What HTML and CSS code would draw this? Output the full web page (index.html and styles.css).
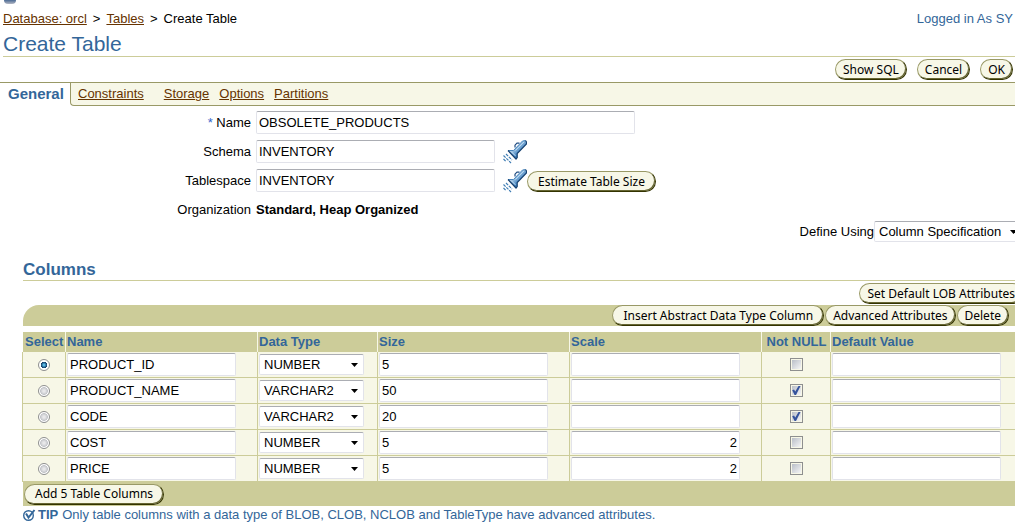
FILE: index.html
```html
<!DOCTYPE html>
<html lang="en">
<head>
<meta charset="utf-8">
<title>Create Table</title>
<link rel="stylesheet" href="styles.css">
</head>
<body>
<svg class="defs" width="0" height="0" aria-hidden="true">
  <defs>
    <linearGradient id="barrel" x1="0" y1="0" x2="1" y2="1">
      <stop offset="0.3" stop-color="#c4def2"/><stop offset="0.65" stop-color="#3d7fbd"/>
    </linearGradient>
    <symbol id="torch" viewBox="0 0 24 24">
      <path d="M12 7.5V5.2L14 3.2H16.5" fill="none" stroke="#1d4a80" stroke-width="1.2"/>
      <path d="M5 10.5H10.5L19.5 1L22.5.5L23.5 2V4L14.2 13.5V17.5L13 19Z" fill="url(#barrel)"/>
      <path d="M5 10.5H10.5L19.5 1L22.5.5" fill="none" stroke="#4a86bd"/>
      <path d="M22.5.5L23.5 2V4L14.2 13.5V17.5L13 19L5 10.5" fill="none" stroke="#16406f" stroke-width="1.2"/>
      <path d="M8.5 11.8L12.4 15.8M12.5 10.5L21 2" stroke="#b9d8f0" fill="none"/>
      <path d="M3 14L9 20M.5 15.5L8 23M.5 19L3 21.5" fill="none" stroke="#3f7db4" stroke-width="1.2" stroke-dasharray="3 1"/>
    </symbol>
  </defs>
</svg>
<div class="orb" aria-hidden="true"></div>
<header class="head">
  <nav class="crumbs"><a href="#">Database: orcl</a><span>&gt;</span><a href="#">Tables</a><span>&gt;</span><b>Create Table</b></nav>
  <span class="login">Logged in As SY</span>
</header>
<h1 class="title">Create Table</h1>
<div class="actions">
  <button class="btn">Show SQL</button><button class="btn">Cancel</button><button class="btn">OK</button>
</div>
<nav class="tabs">
  <span class="tab-current">General</span>
  <div class="tab-strip"><a href="#" class="wide">Constraints</a><a href="#">Storage</a><a href="#">Options</a><a href="#">Partitions</a></div>
</nav>
<form class="form">
  <div class="row"><label for="name"><span class="req">*</span> Name</label><input id="name" class="field long" value="OBSOLETE_PRODUCTS"></div>
  <div class="row"><label for="schema">Schema</label><input id="schema" class="field mid" value="INVENTORY"><button type="button" class="pick" aria-label="Select schema"><svg width="24" height="24"><use href="#torch"/></svg></button></div>
  <div class="row"><label for="space">Tablespace</label><input id="space" class="field mid" value="INVENTORY"><button type="button" class="pick" aria-label="Select tablespace"><svg width="24" height="24"><use href="#torch"/></svg></button><button type="button" class="btn btn-long btn-low">Estimate Table Size</button></div>
  <div class="row"><span class="label">Organization</span><strong>Standard, Heap Organized</strong></div>
</form>
<div class="define"><label for="define">Define Using</label><select id="define" class="select"><option>Column Specification</option></select></div>
<section class="columns">
  <h2>Columns</h2>
  <div class="lob"><button class="btn">Set Default LOB Attributes</button></div>
  <div class="bar"><button class="btn btn-long">Insert Abstract Data Type Column</button><button class="btn">Advanced Attributes</button><button class="btn">Delete</button></div>
  <table class="grid">
    <colgroup><col class="c-select"><col class="c-text"><col class="c-type"><col class="c-text"><col class="c-text"><col class="c-null"><col></colgroup>
    <thead><tr><th>Select</th><th>Name</th><th>Data Type</th><th>Size</th><th>Scale</th><th class="center">Not NULL</th><th>Default Value</th></tr></thead>
    <tbody>
      <tr><td class="center"><input type="radio" name="r" aria-label="Select PRODUCT_ID" checked></td><td><input class="field" aria-label="Name" value="PRODUCT_ID"></td><td><select class="select" aria-label="Data Type"><option>NUMBER</option></select></td><td><input class="field" aria-label="Size" value="5"></td><td><input class="field num" aria-label="Scale"></td><td class="center"><input type="checkbox" aria-label="Not NULL"></td><td><input class="field" aria-label="Default Value"></td></tr>
      <tr><td class="center"><input type="radio" name="r" aria-label="Select PRODUCT_NAME"></td><td><input class="field" aria-label="Name" value="PRODUCT_NAME"></td><td><select class="select" aria-label="Data Type"><option>VARCHAR2</option></select></td><td><input class="field" aria-label="Size" value="50"></td><td><input class="field num" aria-label="Scale"></td><td class="center"><input type="checkbox" aria-label="Not NULL" checked></td><td><input class="field" aria-label="Default Value"></td></tr>
      <tr><td class="center"><input type="radio" name="r" aria-label="Select CODE"></td><td><input class="field" aria-label="Name" value="CODE"></td><td><select class="select" aria-label="Data Type"><option>VARCHAR2</option></select></td><td><input class="field" aria-label="Size" value="20"></td><td><input class="field num" aria-label="Scale"></td><td class="center"><input type="checkbox" aria-label="Not NULL" checked></td><td><input class="field" aria-label="Default Value"></td></tr>
      <tr><td class="center"><input type="radio" name="r" aria-label="Select COST"></td><td><input class="field" aria-label="Name" value="COST"></td><td><select class="select" aria-label="Data Type"><option>NUMBER</option></select></td><td><input class="field" aria-label="Size" value="5"></td><td><input class="field num" aria-label="Scale" value="2"></td><td class="center"><input type="checkbox" aria-label="Not NULL"></td><td><input class="field" aria-label="Default Value"></td></tr>
      <tr><td class="center"><input type="radio" name="r" aria-label="Select PRICE"></td><td><input class="field" aria-label="Name" value="PRICE"></td><td><select class="select" aria-label="Data Type"><option>NUMBER</option></select></td><td><input class="field" aria-label="Size" value="5"></td><td><input class="field num" aria-label="Scale" value="2"></td><td class="center"><input type="checkbox" aria-label="Not NULL"></td><td><input class="field" aria-label="Default Value"></td></tr>
    </tbody>
  </table>
  <div class="foot"><button class="btn btn-long">Add 5 Table Columns</button></div>
  <p class="tip"><svg width="13" height="13" viewBox="0 0 13 13" aria-hidden="true"><circle cx="5.5" cy="6.5" r="4.8" fill="#fff" stroke="#336699" stroke-width="1.4"/><path d="M3 4.5L5.5 8.5L11.5 1" fill="none" stroke="#336699" stroke-width="2"/></svg><b>TIP</b><span>Only table columns with a data type of BLOB, CLOB, NCLOB and TableType have advanced attributes.</span></p>
</section>
</body>
</html>
```
FILE: styles.css
```css
* { box-sizing: border-box; }
body {
  margin: 0;
  overflow: hidden;
  background: #fff;
  color: #000;
  font: 13px/16px "Liberation Sans", Arial, sans-serif;
  white-space: nowrap;
}
input, select { font: inherit; color: #000; }
a { color: #663300; }
.defs { display: block; height: 0; }
.orb {
  width: 12px;
  height: 4px;
  margin-left: 4px;
  border-radius: 0 0 6px 6px;
  background: linear-gradient(#4a6a94, #b4b8c4);
}
.head { display: flex; justify-content: space-between; padding: 7px 2px 0 3px; }
.crumbs { display: flex; gap: 6px; }
.crumbs b { font-weight: 400; }
.login { color: #336699; }
.title {
  margin: 5px 0 0 3px;
  border-bottom: 1px solid #cccc99;
  color: #336699;
  font-size: 21px;
  font-weight: 400;
  line-height: 24px;
}
.btn {
  height: 21px;
  padding: 0 7px;
  border: 1px solid #999966;
  border-right-color: #333300;
  border-bottom-color: #333300;
  border-radius: 11px;
  background: #f7f7e7;
  box-shadow: inset -1px -1px #666633;
  color: #000;
  font: 12px/16px "Noto Sans", sans-serif;
  white-space: nowrap;
}
.btn-long { padding: 0 10px; }
.btn-low { align-self: flex-end; }
.actions { display: flex; justify-content: flex-end; gap: 10px; padding: 2px 2px 2px 0; }
.tabs { display: flex; height: 24px; border-top: 1px solid #999966; }
.tab-current {
  width: 70px;
  padding-left: 8px;
  color: #336699;
  font-size: 15px;
  font-weight: 700;
  line-height: 22px;
}
.tab-strip {
  display: flex;
  flex: 1;
  gap: 10px;
  padding-left: 7px;
  border: solid #999966;
  border-width: 0 0 1px 1px;
  border-radius: 0 0 0 4px;
  background: #f7f7e7;
  line-height: 22px;
}
.wide { margin-right: 10px; }
.form { display: flex; flex-direction: column; gap: 6px; padding-top: 5px; }
.row { display: flex; height: 23px; align-items: center; }
.row label, .label { width: 251px; margin-right: 5px; text-align: right; }
.req { color: #3366cc; }
.field {
  display: block;
  width: 169px;
  height: 23px;
  padding: 0 2px;
  border: 1px solid #e2e3ea;
  border-top-color: #abadb3;
  border-radius: 2px;
  background: #fff;
}
.long { width: 379px; }
.mid { width: 239px; }
.num { text-align: right; }
.pick { width: 24px; height: 24px; margin-left: 8px; padding: 0; border: 0; background: none; }
.pick svg { display: block; }
.select {
  appearance: none;
  display: block;
  width: 105px;
  height: 21px;
  padding: 0 4px;
  border: 1px solid #e2e3ea;
  border-top-color: #abadb3;
  border-radius: 2px;
  background: #fff url("data:image/svg+xml,%3Csvg xmlns='http://www.w3.org/2000/svg' width='7' height='4'%3E%3Cpath d='M0 0h7L3.5 4z'/%3E%3C/svg%3E") no-repeat right 5px center;
}
.define { display: flex; justify-content: flex-end; align-items: center; margin-right: -8px; }
.define .select { width: 149px; }
.columns { margin-left: 23px; }
.columns h2 {
  margin: 18px 0 0;
  border-bottom: 1px solid #cccc99;
  color: #336699;
  font-size: 17px;
  line-height: 20px;
}
.lob { display: flex; justify-content: flex-end; margin-right: -8px; padding: 2px 0 1px; }
.bar {
  display: flex;
  justify-content: flex-end;
  gap: 1px;
  padding-right: 6px;
  border-radius: 16px 0 0;
  background: #cccc99;
}
.grid {
  width: calc(100% + 1px);
  margin: 6px 0 0 -1px;
  table-layout: fixed;
  border-spacing: 0;
}
.c-select { width: 43px; }
.c-text { width: 192px; }
.c-type { width: 120px; }
.c-null { width: 69px; }
th {
  height: 20px;
  padding: 0 0 0 1px;
  border-left: 1px solid #f7f7e7;
  background: #cccc99;
  color: #336699;
  text-align: left;
}
th:first-child { padding-left: 2px; border-color: #fff; }
td {
  height: 26px;
  padding: 1px;
  border: solid #cccc99;
  border-width: 0 0 1px 1px;
  background: #f7f7e7;
}
.center { text-align: center; }
input[type="radio"], input[type="checkbox"] {
  appearance: none;
  display: block;
  margin: 0 auto;
}
input[type="radio"] {
  width: 12px;
  height: 12px;
  border: 1px solid #8e8f8f;
  border-radius: 50%;
  background: radial-gradient(circle, #e8e8ea 15%, #c4c6ca 50%, #fff 60%);
}
input[type="radio"]:checked {
  background: radial-gradient(circle, #5cc0ec 8%, #123c68 42%, #fff 50%);
}
input[type="checkbox"] {
  width: 13px;
  height: 13px;
  padding: 1px;
  border: 1px solid #8e8f8f;
  background: linear-gradient(135deg, #b9bec8, #f6f6f6) content-box #f4f4f4;
}
input[type="checkbox"]:checked::before {
  content: "";
  display: block;
  width: 9px;
  height: 9px;
  background: #35539c;
  clip-path: polygon(8% 48%, 28% 40%, 42% 62%, 78% 0, 100% 0, 50% 100%, 34% 100%);
}
.foot { display: flex; align-items: center; height: 24px; padding-left: 1px; background: #cccc99; }
.tip { display: flex; align-items: center; margin: 1px 0 0; color: #336699; }
.tip b { margin: 0 4px 0 2px; }
```
